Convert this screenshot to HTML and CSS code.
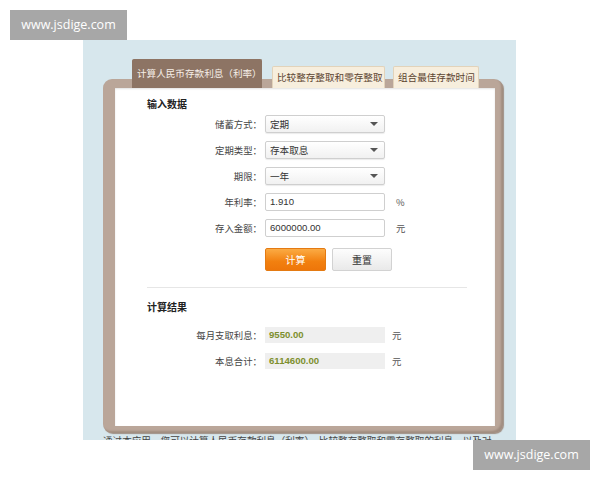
FILE: index.html
```html
<!DOCTYPE html>
<html lang="zh-CN">
<head>
<meta charset="utf-8">
<title>存款利息计算器</title>
<link rel="stylesheet" href="styles.css">
</head>
<body>
<div class="page">
  <div class="panel">
    <div class="tabs">
      <div class="tab active">计算人民币存款利息（利率）</div>
      <div class="tab">比较整存整取和零存整取</div>
      <div class="tab tab3">组合最佳存款时间</div>
    </div>
    <div class="frame">
      <div class="sheet">
        <h2 class="heading">输入数据</h2>
        <div class="form">
          <div class="label">储蓄方式：</div>
          <div class="select"><span>定期</span><i class="arrow"></i></div>
          <div class="unit"></div>

          <div class="label">定期类型：</div>
          <div class="select"><span>存本取息</span><i class="arrow"></i></div>
          <div class="unit"></div>

          <div class="label">期限：</div>
          <div class="select"><span>一年</span><i class="arrow"></i></div>
          <div class="unit"></div>

          <div class="label">年利率：</div>
          <div class="input">1.910</div>
          <div class="unit">%</div>

          <div class="label">存入金额：</div>
          <div class="input">6000000.00</div>
          <div class="unit">元</div>
        </div>
        <div class="buttons">
          <div class="btn btn-calc">计算</div>
          <div class="btn btn-reset">重置</div>
        </div>
        <div class="sep"></div>
        <h2 class="heading heading2">计算结果</h2>
        <div class="form results">
          <div class="label">每月支取利息：</div>
          <div class="result">9550.00</div>
          <div class="unit">元</div>

          <div class="label">本息合计：</div>
          <div class="result">6114600.00</div>
          <div class="unit">元</div>
        </div>
      </div>
    </div>
    <p class="intro">通过本应用，您可以计算人民币存款利息（利率），比较整存整取和零存整取的利息，以及对</p>
  </div>
  <div class="mark mark-top">www.jsdige.com</div>
  <div class="mark mark-bottom">www.jsdige.com</div>
</div>
</body>
</html>
```
FILE: styles.css
```css
html, body {
  margin: 0;
  padding: 0;
  background: #ffffff;
}
body {
  font-family: "Liberation Sans", "Noto Sans CJK SC", sans-serif;
  color: #333;
}
.page {
  position: relative;
  width: 600px;
  height: 480px;
  padding: 40px 0 0 83px;
  box-sizing: border-box;
}
.panel {
  width: 433px;
  height: 400px;
  background: #d7e7ed;
  overflow: hidden;
  padding: 19px 13px 0 20px;
  box-sizing: border-box;
}
.tabs {
  display: flex;
  align-items: flex-end;
  height: 29px;
  padding-left: 29px;
  position: relative;
  z-index: 2;
}
.tab {
  height: 22px;
  box-sizing: border-box;
  padding: 0 4px;
  margin-right: 8px;
  background: #f7eedd;
  border: 1px solid #e2d3ba;
  border-bottom: none;
  border-radius: 2px 2px 0 0;
  color: #5b4330;
  font-family: "Noto Sans CJK SC", sans-serif;
  font-size: 9.6px;
  line-height: 21px;
  white-space: nowrap;
  width: 113px;
  text-align: center;
}
.tab.active {
  height: 29px;
  width: 130px;
  margin-right: 10px;
  background: #8d7464;
  border-color: #8d7464;
  color: #f6efe8;
  line-height: 27px;
}
.tab.tab3 {
  width: 86px;
}
.frame {
  margin-top: -9px;
  height: 354px;
  box-sizing: border-box;
  background: #baa699;
  border-radius: 9px;
  padding: 9px 8px 7px 12px;
  box-shadow: inset -2px -2px 2px #a08d80, 1px 1px 1px #9f8f84;
  position: relative;
  z-index: 1;
}
.sheet {
  background: #ffffff;
  height: 338px;
  padding: 0 28px 0 32px;
  box-sizing: border-box;
  box-shadow: inset 0 1px 2px rgba(0,0,0,0.12);
}
.heading {
  margin: 0;
  padding-top: 10px;
  font-family: "Noto Sans CJK SC", sans-serif;
  font-size: 10px;
  line-height: 12px;
  font-weight: bold;
  color: #222;
}
.form {
  display: grid;
  grid-template-columns: 115px 120px 1fr;
  grid-auto-rows: 18px;
  column-gap: 3px;
  row-gap: 8px;
  margin-top: 5px;
  align-items: center;
}
.label {
  text-align: right;
  font-family: "Noto Sans CJK SC", sans-serif;
  font-size: 9.4px;
  color: #444;
  white-space: nowrap;
}
.unit {
  padding-left: 8px;
  font-family: "Noto Sans CJK SC", sans-serif;
  font-size: 9.4px;
  color: #555;
}
.select, .input {
  height: 18px;
  box-sizing: border-box;
  border: 1px solid #cfcfcf;
  border-radius: 2px;
  padding: 0 4px;
  font-size: 9.6px;
  line-height: 16px;
  color: #333;
  display: flex;
  align-items: center;
  justify-content: space-between;
}
.select {
  background: linear-gradient(#ffffff, #f1f1f1);
  box-shadow: 0 1px 1px rgba(0,0,0,0.08);
  font-family: "Noto Sans CJK SC", sans-serif;
}
.input {
  background: #ffffff;
  font-family: "Liberation Sans", sans-serif;
}
.arrow {
  width: 0;
  height: 0;
  border-left: 4px solid transparent;
  border-right: 4px solid transparent;
  border-top: 4px solid #555;
  margin-right: 2px;
}
.buttons {
  display: flex;
  gap: 6px;
  margin: 11px 0 0 118px;
}
.btn {
  height: 23px;
  width: 61px;
  box-sizing: border-box;
  border-radius: 2px;
  text-align: center;
  font-family: "Noto Sans CJK SC", sans-serif;
  font-size: 10px;
  line-height: 21px;
}
.btn-calc {
  background: linear-gradient(#fbab44, #f2800f 60%, #ee760a);
  border: 1px solid #e47a12;
  color: #ffffff;
}
.btn-reset {
  background: linear-gradient(#fdfdfd, #e9e9e9);
  border: 1px solid #d2d2d2;
  color: #333;
  width: 60px;
}
.sep {
  height: 1px;
  background: #e6e6e6;
  margin-top: 16px;
}
.heading2 {
  padding-top: 13px;
}
.results {
  margin-top: 14px;
  grid-auto-rows: 16px;
  row-gap: 10px;
}
.result {
  height: 16px;
  background: #efefef;
  padding: 0 4px;
  font-family: "Liberation Sans", sans-serif;
  font-size: 9.6px;
  font-weight: bold;
  line-height: 16px;
  color: #7e8f2e;
}
.results .unit {
  padding-left: 4px;
}
.intro {
  margin: 1px 0 0 0;
  font-family: "Noto Sans CJK SC", sans-serif;
  font-size: 9.6px;
  line-height: 12px;
  color: #444;
  white-space: nowrap;
}
.mark {
  position: absolute;
  background: #a7a7a7;
  color: #ffffff;
  font-family: "Open Sans", sans-serif;
  font-size: 12.5px;
  width: 117px;
  height: 30px;
  line-height: 30px;
  text-align: center;
}
.mark-top {
  left: 10px;
  top: 10px;
}
.mark-bottom {
  left: 473px;
  top: 440px;
}
```
